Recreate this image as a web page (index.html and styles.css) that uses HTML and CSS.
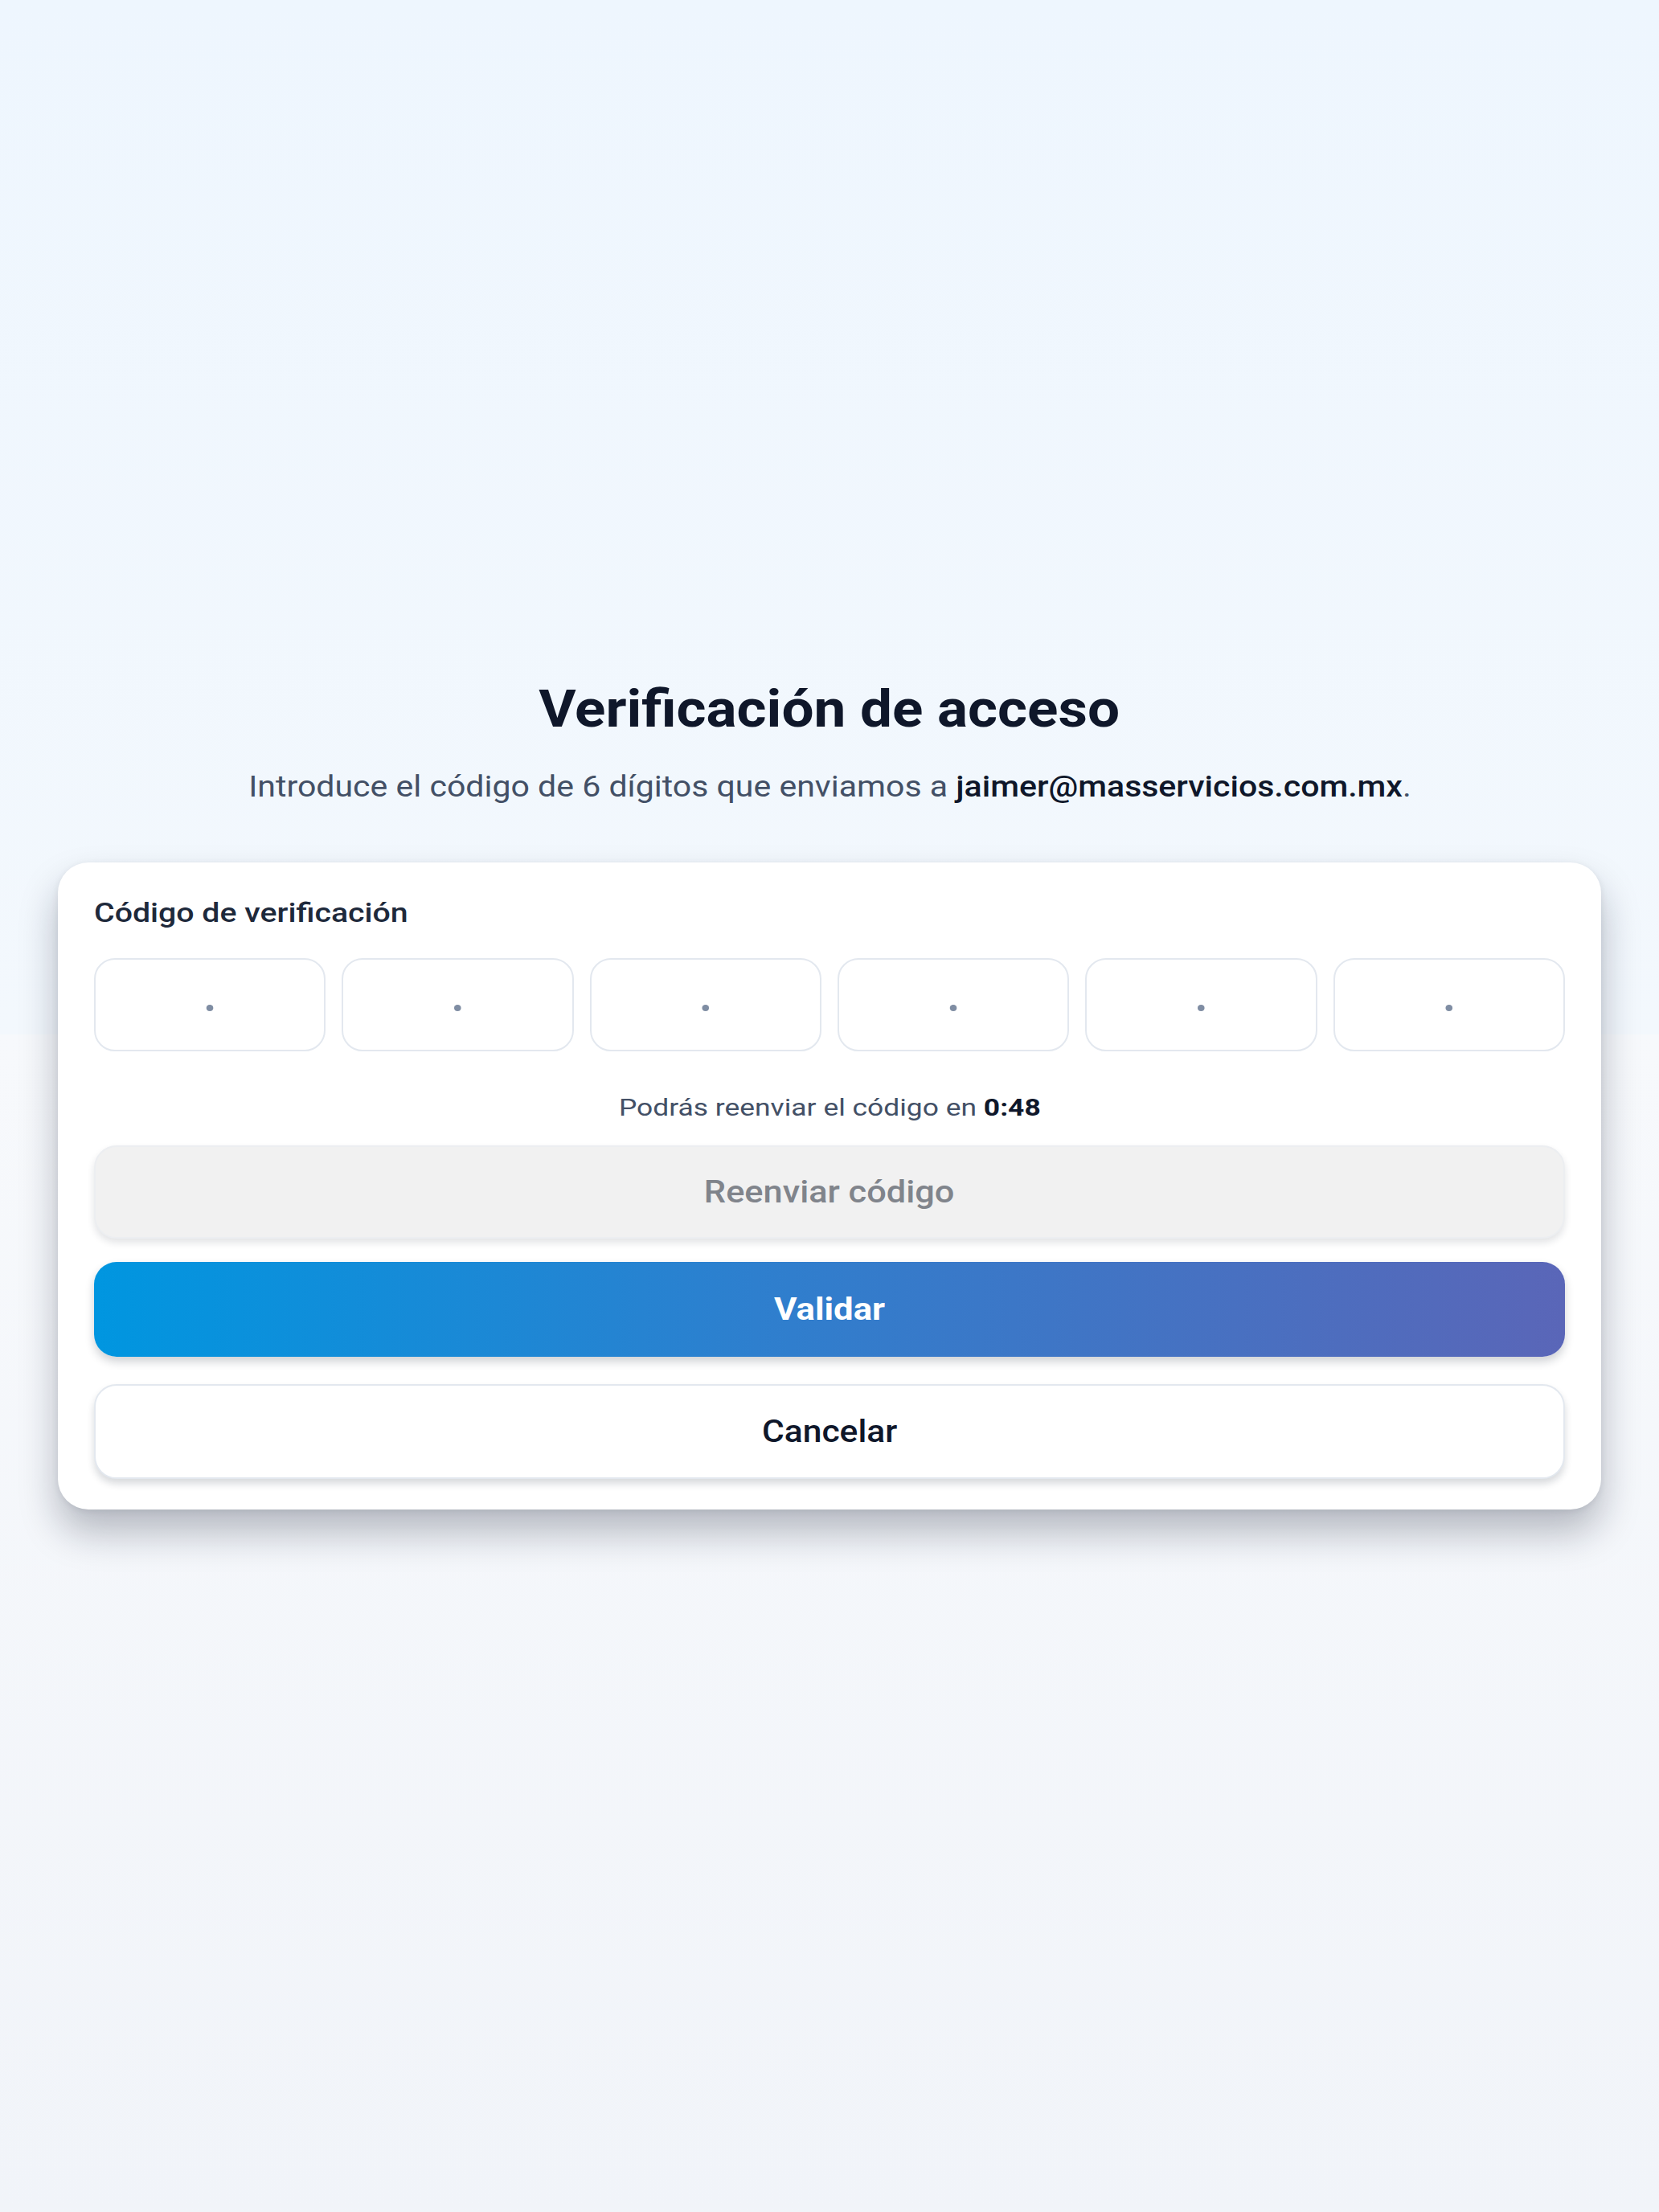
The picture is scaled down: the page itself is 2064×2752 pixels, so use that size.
FILE: index.html
```html
<!DOCTYPE html>
<html lang="es">
<head>
<meta charset="utf-8">
<title>Verificación de acceso</title>
<link rel="stylesheet" href="styles.css">
</head>
<body>
<main class="page">
  <h1 class="title"><span class="wide wide-title">Verificación de acceso</span></h1>
  <p class="subtitle"><span class="wide wide-sub">Introduce el código de 6 dígitos que enviamos a <strong>jaimer@masservicios.com.mx</strong>.</span></p>
  <section class="card">
    <label class="label"><span class="wide wide-label">Código de verificación</span></label>
    <div class="code-row">
      <input class="code-box" type="text" maxlength="1" placeholder="·">
      <input class="code-box" type="text" maxlength="1" placeholder="·">
      <input class="code-box" type="text" maxlength="1" placeholder="·">
      <input class="code-box" type="text" maxlength="1" placeholder="·">
      <input class="code-box" type="text" maxlength="1" placeholder="·">
      <input class="code-box" type="text" maxlength="1" placeholder="·">
    </div>
    <p class="timer"><span class="wide wide-timer">Podrás reenviar el código en <strong>0:48</strong></span></p>
    <button class="btn btn-resend" type="button"><span class="wide wide-resend">Reenviar código</span></button>
    <button class="btn btn-validate" type="button"><span class="wide wide-validate">Validar</span></button>
    <button class="btn btn-cancel" type="button"><span class="wide wide-cancel">Cancelar</span></button>
  </section>
</main>
</body>
</html>
```

FILE: styles.css
```css
html {
  background: linear-gradient(180deg, #eef6fe 0px, #f3f8fd 1287px, #f7f9fc 1287px, #f1f4f9 2752px);
  min-height: 100%;
}
body {
  margin: 0;
  min-height: 100vh;
  font-family: Roboto, "Noto Sans", "Liberation Sans", sans-serif;
  color: #0f172a;
}
.page {
  box-sizing: border-box;
  width: 1920px;
  min-height: 100vh;
  margin: 0 auto;
  padding-top: 847px;
  padding-bottom: 200px;
  display: flex;
  flex-direction: column;
  align-items: stretch;
}
.wide {
  display: inline-block;
  transform-origin: 50% 50%;
}
.wide-title { transform: scaleX(1.11); }
.wide-sub { transform: scaleX(1.14); }
.wide-label { transform: scaleX(1.19); transform-origin: 0 50%; }
.wide-timer { transform: scaleX(1.18); }
.wide-resend { transform: scaleX(1.14); }
.wide-validate { transform: scaleX(1.15); }
.wide-cancel { transform: scaleX(1.12); }

.title {
  margin: 0;
  text-align: center;
  font-size: 64px;
  line-height: 72px;
  font-weight: 700;
  color: #0f172a;
}
.subtitle {
  margin: 33px 0 0;
  text-align: center;
  font-size: 36px;
  line-height: 54px;
  color: #435066;
}
.subtitle strong {
  color: #0f172a;
  font-weight: 500;
}
.card {
  margin-top: 67px;
  background: #ffffff;
  border-radius: 38px;
  padding: 43px 45px 38px;
  box-shadow: 0 28px 48px rgba(15, 23, 42, 0.28), 0 2px 8px rgba(15, 23, 42, 0.08);
  display: flex;
  flex-direction: column;
}
.label {
  font-size: 33px;
  line-height: 40px;
  font-weight: 500;
  color: #1e293b;
}
.code-row {
  margin-top: 36px;
  display: grid;
  grid-template-columns: repeat(6, 1fr);
  gap: 20px;
}
.code-box {
  box-sizing: border-box;
  width: 100%;
  height: 116px;
  border: 2px solid #e3e8ef;
  border-radius: 26px;
  background: #ffffff;
  text-align: center;
  font-family: Roboto, "Noto Sans", sans-serif;
  font-size: 54px;
  font-weight: 700;
  color: #0f172a;
  padding: 6px 0 0;
  outline: none;
}
.code-box::placeholder {
  color: #7f8da3;
  opacity: 1;
}
.timer {
  margin: 50px 0 0;
  text-align: center;
  font-size: 30px;
  line-height: 40px;
  color: #435066;
}
.timer strong {
  color: #0f172a;
  font-weight: 700;
}
.btn {
  box-sizing: border-box;
  width: 100%;
  height: 116px;
  border-radius: 28px;
  font-family: Roboto, "Noto Sans", sans-serif;
  font-size: 38px;
  cursor: pointer;
}
.btn-resend {
  margin-top: 27px;
  background: #f1f1f1;
  border: 2px solid #eceef1;
  color: #80848b;
  font-weight: 500;
  box-shadow: 0 5px 10px rgba(15, 23, 42, 0.12);
}
.btn-validate {
  margin-top: 29px;
  height: 118px;
  border: none;
  background: linear-gradient(90deg, #0096e0 0%, #2e7fce 45%, #5a66b8 100%);
  color: #ffffff;
  font-weight: 700;
  box-shadow: 0 6px 12px rgba(15, 23, 42, 0.20);
}
.btn-cancel {
  margin-top: 34px;
  height: 118px;
  background: #ffffff;
  border: 2px solid #e3e8ef;
  color: #0f172a;
  font-weight: 500;
  box-shadow: 0 6px 10px rgba(15, 23, 42, 0.16);
}
```
